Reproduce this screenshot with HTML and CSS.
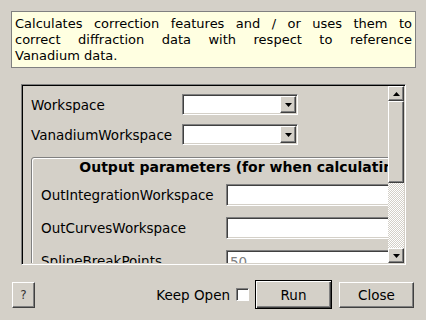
FILE: index.html
```html
<!DOCTYPE html>
<html>
<head>
  <meta charset="utf-8">
  <title>Algorithm dialog</title>
  <link rel="stylesheet" href="styles.css">
</head>
<body>
  <div class="desc">
    <span class="line">Calculates correction features and / or uses them to</span>
    <span class="line">correct diffraction data with respect to reference</span>
    <span class="line last">Vanadium data.</span>
  </div>

  <div class="frame">
    <div class="viewport">
      <div class="content">
        <div class="prop">
          <span class="label">Workspace</span>
          <div class="combo">
            <span class="drop"><svg width="7" height="4" viewBox="0 0 7 4"><polygon points="0,0 7,0 3.5,4" fill="#000"/></svg></span>
          </div>
        </div>
        <div class="prop">
          <span class="label">VanadiumWorkspace</span>
          <div class="combo">
            <span class="drop"><svg width="7" height="4" viewBox="0 0 7 4"><polygon points="0,0 7,0 3.5,4" fill="#000"/></svg></span>
          </div>
        </div>

        <div class="group">
          <div class="title">Output parameters (for when calculating)</div>
          <div class="grow">
            <span class="glabel">OutIntegrationWorkspace</span>
            <div class="edit"></div>
          </div>
          <div class="grow">
            <span class="glabel">OutCurvesWorkspace</span>
            <div class="edit"></div>
          </div>
          <div class="grow">
            <span class="glabel">SplineBreakPoints</span>
            <div class="edit hint">50</div>
          </div>
        </div>
      </div>
    </div>
    <div class="vscroll">
      <div class="sbtn"><svg width="7" height="4" viewBox="0 0 7 4"><polygon points="3.5,0 7,4 0,4" fill="#000"/></svg></div>
      <div class="thumb"></div>
      <div class="trough"></div>
      <div class="sbtn"><svg width="7" height="4" viewBox="0 0 7 4"><polygon points="0,0 7,0 3.5,4" fill="#000"/></svg></div>
    </div>
  </div>

  <div class="bar">
    <div class="btn help">?</div>
    <span class="spacer"></span>
    <label class="keep">Keep Open <span class="check"></span></label>
    <div class="btn run">Run</div>
    <div class="btn close">Close</div>
  </div>
</body>
</html>
```

FILE: styles.css
```css
body{
  margin: 0;
  width: 426px;
  height: 320px;
  overflow: hidden;
  background: #d4d0c8;
  color: #000;
  font-family: "DejaVu Sans", sans-serif;
  font-size: 13.5px;
}
.desc{
  margin: 11px 0 0 11px;
  width: 405px;
  height: 57px;
  box-sizing: border-box;
  border: 1px solid #808080;
  background: #ffffe1;
  padding: 4px 3px 0 3px;
  font-size: 13px;
  line-height: 16px;
}
.desc .line{
  display: block;
  text-align: justify;
  text-align-last: justify;
}
.desc .last{
  text-align-last: left;
}

/* scroll area with the properties */
.frame{
  display: flex;
  margin: 16px 0 0 21px;
  width: 385px;
  height: 181px;
  box-sizing: border-box;
  border: 1px solid;
  border-color: #808080 #fff #fff #808080;
  box-shadow: inset 1px 1px #000;
  padding: 1px;
}
.viewport{
  flex: 1;
  overflow: hidden;
}
.content{
  display: flex;
  flex-direction: column;
  align-items: flex-start;
  padding: 8px 0 0 8px;
}
.prop{
  display: flex;
  align-items: center;
  height: 21px;
}
.prop + .prop{
  margin-top: 9px;
}
.label{
  width: 151px;
  flex: none;
  white-space: nowrap;
}
.combo{
  display: flex;
  justify-content: flex-end;
  width: 116px;
  height: 21px;
  box-sizing: border-box;
  background: #fff;
  border: 1px solid;
  border-color: #808080 #fff #fff #808080;
  box-shadow: inset 1px 1px #404040, inset -1px -1px #d4d0c8;
  padding: 1px;
}
.drop, .sbtn{
  display: flex;
  align-items: center;
  justify-content: center;
  width: 16px;
  box-sizing: border-box;
  background: #d4d0c8;
  border: 1px solid;
  border-color: #fff #404040 #404040 #fff;
  box-shadow: inset -1px -1px #808080;
}
.group{
  flex: none;
  margin-top: 12px;
  width: 418px;
  box-sizing: border-box;
  border: 1px solid #808080;
  border-radius: 3px;
  box-shadow: inset 1px 1px #fff;
  padding: 1px 0 10px 9px;
}
.title{
  font-weight: bold;
  font-size: 14px;
  line-height: 17px;
  text-align: center;
  white-space: nowrap;
  margin-bottom: 8px;
}
.grow{
  display: flex;
  align-items: center;
  height: 22px;
}
.grow + .grow{
  margin-top: 11px;
}
.glabel{
  width: 185px;
  flex: none;
  white-space: nowrap;
}
.edit{
  flex: 1;
  height: 22px;
  box-sizing: border-box;
  background: #fff;
  border: 1px solid;
  border-color: #808080 #fff #fff #808080;
  box-shadow: inset 1px 1px #404040, inset -1px -1px #d4d0c8;
  padding: 2px 3px;
  line-height: 18px;
}
.hint{
  color: #808080;
}
.vscroll{
  display: flex;
  flex-direction: column;
  width: 16px;
  flex: none;
}
.sbtn{
  height: 15px;
}
.thumb{
  height: 82px;
  box-sizing: border-box;
  border: 1px solid;
  border-color: #fff #404040 #404040 #fff;
  box-shadow: inset -1px -1px #808080;
}
.trough{
  flex: 1;
  background: repeating-conic-gradient(#fff 0 25%, #d4d0c8 0 50%) 0 0/2px 2px;
}

/* bottom buttons */
.bar{
  display: flex;
  align-items: center;
  height: 29px;
  margin: 15px 12px 0 12px;
}
.btn{
  display: flex;
  align-items: center;
  justify-content: center;
  box-sizing: border-box;
  height: 26px;
  border: 1px solid;
  border-color: #fff #404040 #404040 #fff;
  box-shadow: inset -1px -1px #808080;
}
.help{
  width: 23px;
  font-size: 12px;
  color: #333;
}
.spacer{
  flex: 1;
}
.keep{
  display: flex;
  align-items: center;
  gap: 6px;
}
.check{
  width: 13px;
  height: 13px;
  box-sizing: border-box;
  background: #fff;
  border: 1px solid;
  border-color: #808080 #fff #fff #808080;
  box-shadow: inset 1px 1px #404040;
}
.run{
  margin-left: 6px;
  width: 77px;
  height: 29px;
  border: 1px solid #000;
  box-shadow: inset 1px 1px #fff, inset -1px -1px #404040, inset -2px -2px #808080;
}
.close{
  margin-left: 7px;
  width: 75px;
}
```
